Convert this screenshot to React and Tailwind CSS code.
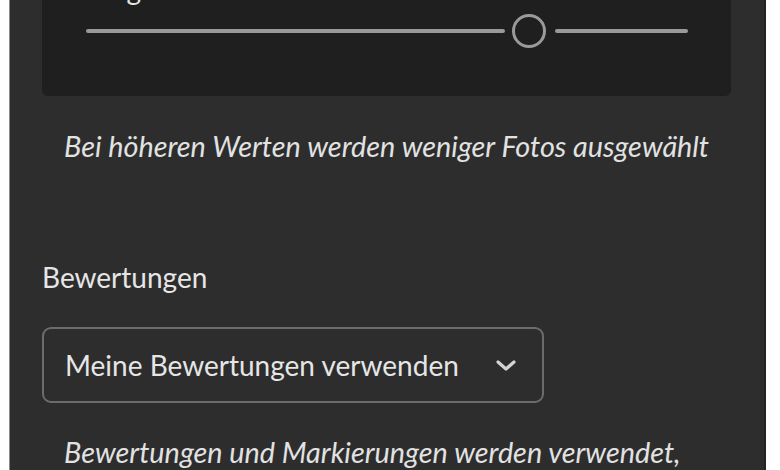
import React from 'react';

const font = { fontFamily: 'Lato, "Open Sans", "Liberation Sans", sans-serif' };

const Slider = () => (
  <div className="flex items-center h-[34px] pl-[44px] pr-[43px]">
    <div className="w-[419px] h-[4px] rounded-full bg-[#9a9a9a]"></div>
    <div className="ml-[7px] w-[34px] h-[34px] shrink-0 rounded-full border-[3px] border-[#9a9a9a] bg-[#1f1f1f]"></div>
    <div className="ml-[9px] flex-1 h-[4px] rounded-full bg-[#9a9a9a]"></div>
  </div>
);

const Chevron = () => (
  <svg width="22" height="13" viewBox="0 0 22 13" fill="none" className="shrink-0">
    <path d="M3 3l8 7 8-7" stroke="#d4d4d4" strokeWidth="3.2" strokeLinecap="round" strokeLinejoin="round" />
  </svg>
);

export default function App() {
  return (
    <div className="w-[780px] h-[470px] bg-white flex overflow-hidden" style={font}>
      <div className="ml-[9px] w-[757px] h-full bg-[#2d2d2d] border-l border-[#8a8a8a] border-r-2 border-r-[#242424] overflow-hidden">
        {/* strictness card, scrolled partly out of view */}
        <div className="ml-[32px] w-[689px] -mt-[44px] pt-[16px] pb-[48px] bg-[#1f1f1f] rounded-md">
          <p className="pl-[20px] text-[28px] leading-[34px] text-[#e4e4e4]">Strenge</p>
          <div className="mt-[8px]">
            <Slider />
          </div>
        </div>

        <p className="mt-[33px] ml-[54px] text-[28.8px] leading-[34px] italic text-[#e2e2e2] whitespace-nowrap">
          Bei höheren Werten werden weniger Fotos ausgewählt
        </p>

        <p className="mt-[97px] ml-[32px] text-[28px] leading-[34px] text-[#e6e6e6]">Bewertungen</p>

        <button className="mt-[33px] ml-[32px] w-[502px] h-[76px] flex items-center justify-between pl-[21px] pr-[25px] rounded-[9px] border-2 border-[#6c6c6c] bg-transparent">
          <span className="text-[28px] leading-[34px] text-[#e6e6e6]">Meine Bewertungen verwenden</span>
          <Chevron />
        </button>

        <p className="mt-[32px] ml-[54px] text-[28.8px] leading-[34px] italic text-[#e2e2e2] whitespace-nowrap">
          Bewertungen und Markierungen werden verwendet,
        </p>
      </div>
    </div>
  );
}
